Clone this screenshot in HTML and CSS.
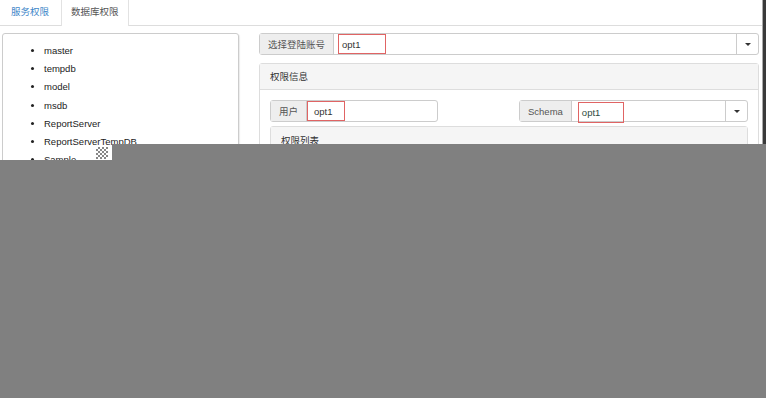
FILE: index.html
```html
<!DOCTYPE html>
<html>
<head>
    <title>数据库权限</title>
    <link rel="stylesheet" href="styles.css">
</head>
<body>
    <!-- 顶部标签页 -->
    <ul class="tabs">
        <li class="tab"><a href="#">服务权限</a></li>
        <li class="tab active"><a href="#">数据库权限</a></li>
    </ul>

    <div class="content">
        <!-- 数据库列表 -->
        <div class="db-tree">
            <ul class="db-list">
                <li>master</li>
                <li>tempdb</li>
                <li>model</li>
                <li>msdb</li>
                <li>ReportServer</li>
                <li>ReportServerTempDB</li>
                <li>Sample</li>
                <li>Test</li>
            </ul>
        </div>

        <div class="right-col">
            <div class="input-group">
                <span class="addon">选择登陆账号</span>
                <div class="field"><span class="mark mark-login">opt1</span></div>
                <span class="caret-btn"><i class="caret"></i></span>
            </div>

            <div class="panel">
                <div class="panel-heading">权限信息</div>
                <div class="panel-body">
                    <div class="row">
                        <div class="input-group group-user">
                            <span class="addon">用户</span>
                            <div class="field field-flush"><span class="mark mark-user">opt1</span></div>
                        </div>
                        <div class="input-group group-schema">
                            <span class="addon">Schema</span>
                            <div class="field"><span class="mark mark-schema">opt1</span></div>
                            <span class="caret-btn"><i class="caret"></i></span>
                        </div>
                    </div>
                    <div class="panel inner-panel">
                        <div class="panel-heading">权限列表</div>
                        <div class="panel-body"></div>
                    </div>
                </div>
            </div>
        </div>
    </div>

    <!-- 遮罩 -->
    <div class="shade shade-a"></div>
    <div class="shade shade-b"></div>
    <div class="drag-handle"></div>
    <div class="window-edge"></div>
</body>
</html>
```

FILE: styles.css
```css
html, body {
    height: 398px;
}

body {
    margin: 0;
    background: #fff;
    font-family: "Liberation Sans", "Noto Sans CJK SC", sans-serif;
    font-size: 9.5px;
    color: #333;
    overflow: hidden;
}

/* 标签页 */
.tabs {
    display: flex;
    list-style: none;
    margin: 0;
    padding: 0;
    height: 25px;
    border-bottom: 1px solid #ddd;
}

.tab {
    margin-right: 1px;
}

.tab a {
    display: block;
    height: 25px;
    line-height: 24px;
    padding: 0 10px;
    color: #3f87c9;
    text-decoration: none;
    border: 1px solid transparent;
    border-bottom: none;
    border-top: none;
}

.tab.active a {
    padding: 0 9px;
    color: #555;
    background: #fff;
    border-color: #e2e2e2;
    height: 26px;
}

.content {
    display: grid;
    grid-template-columns: 237px 1fr;
    gap: 20px;
    padding: 7px 7px 0 2px;
}

/* 左侧数据库列表 */
.db-tree {
    border: 1px solid #ccc;
    border-radius: 3px;
    box-shadow: 1px 1px 1px rgba(0,0,0,0.08);
    height: 350px;
    overflow: hidden;
}

.db-list {
    margin: 0;
    padding: 8px 0 0 41px;
    line-height: 18.2px;
    color: #222;
}

/* 输入组 */
.input-group {
    display: flex;
    height: 22px;
    box-sizing: border-box;
    border: 1px solid #ccc;
    border-radius: 3px;
    background: #fff;
}

.addon {
    display: flex;
    align-items: center;
    padding: 0 8px;
    background: #eee;
    color: #555;
    border-right: 1px solid #ccc;
}

.field {
    flex: 1;
    display: flex;
    align-items: center;
    padding-left: 4px;
}

.field-flush {
    padding-left: 0;
}

.mark {
    display: flex;
    align-items: center;
    box-sizing: border-box;
    height: 20px;
    padding-left: 3px;
    border: 1px solid #e06464;
    color: #333;
}

.mark-login {
    width: 48px;
}

.mark-user {
    width: 38px;
    padding-left: 6px;
}

.mark-schema {
    width: 46px;
    height: 21px;
    margin-top: 2px;
    margin-left: 2px;
    color: #2d4a3e;
}

.caret-btn {
    width: 21px;
    display: flex;
    align-items: center;
    justify-content: center;
    border-left: 1px solid #ccc;
}

.caret {
    width: 0;
    height: 0;
    border-top: 3px solid #333;
    border-left: 3px solid transparent;
    border-right: 3px solid transparent;
}

/* 面板 */
.panel {
    margin-top: 8px;
    border: 1px solid #ddd;
    border-radius: 3px;
}

.panel-heading {
    height: 25px;
    line-height: 25px;
    padding: 0 10px;
    background: #f5f5f5;
    border-bottom: 1px solid #ddd;
}

.panel-body {
    padding: 10px;
    min-height: 80px;
}

.row {
    display: flex;
    justify-content: space-between;
}

.group-user {
    width: 168px;
}

.group-schema {
    width: 229px;
}

.inner-panel {
    margin-top: 4px;
}

.inner-panel .panel-heading {
    height: 27px;
    line-height: 27px;
}

/* 遮罩层 */
.shade {
    position: absolute;
    right: 0;
    bottom: 0;
    background: #808080;
}

.shade-a {
    left: 112px;
    top: 144px;
}

.shade-b {
    left: 0;
    top: 160px;
}

.drag-handle {
    position: absolute;
    left: 96px;
    top: 147px;
    width: 12px;
    height: 12px;
    background: repeating-conic-gradient(#888 0 25%, #fff 0 50%) 0 0 / 4px 4px;
}

.window-edge {
    position: absolute;
    top: 0;
    right: 0;
    width: 3px;
    height: 144px;
    background: #3a3a3a;
    border-left: 1px solid #aaa;
}
```
